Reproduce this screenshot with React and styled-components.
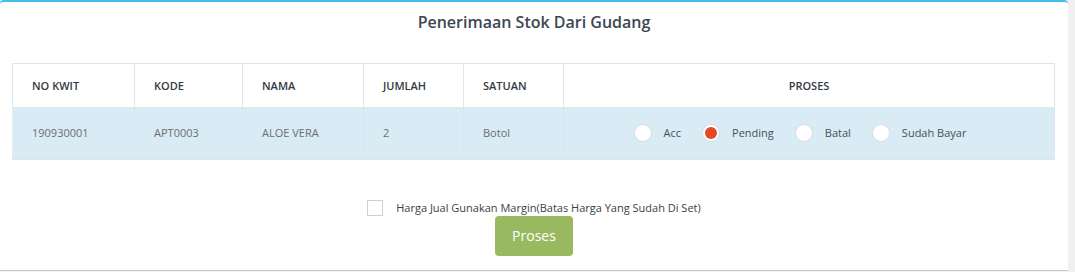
import React, { useState } from "react";
import styled, { createGlobalStyle } from "styled-components";

const Global = createGlobalStyle`
  html, body { margin: 0; padding: 0; background: #f0f0f0; }
  body { font-family: "Open Sans", "Noto Sans", sans-serif; }
  * { box-sizing: border-box; }
`;

const Page = styled.div`
  width: 1075px;
  height: 272px;
  background: #f0f0f0;
  overflow: hidden;
`;

const Panel = styled.section`
  width: 1068px;
  height: 271px;
  background: #fff;
  border-top: 2px solid #3ec0ea;
  border-bottom: 1px solid #c9c9c9;
  border-radius: 4px 4px 0 0;
  display: flex;
  flex-direction: column;
`;

const Title = styled.h3`
  margin: 0;
  height: 42px;
  padding-top: 9px;
  text-align: center;
  font-size: 16px;
  font-weight: 600;
  color: #3b4752;
  line-height: 22px;
`;

const TableWrap = styled.div`
  margin: 19px 13px 0 12px;
`;

const Table = styled.table`
  width: 100%;
  border-collapse: collapse;
  table-layout: fixed;
  font-size: 11px;
`;

const Th = styled.th`
  height: 44px;
  padding: 0 0 0 19px;
  text-align: ${(p) => (p.$center ? "center" : "left")};
  font-weight: 600;
  color: #333a40;
  border: 1px solid #dde6ee;
  background: #fff;
`;

const Row = styled.tr`
  background: #d9ebf5;
`;

const Td = styled.td`
  height: 51px;
  padding: 0 0 0 19px;
  color: #6d6d70;
  border-left: 1px solid #e3edf3;
  border-right: 1px solid #dde6ee;
  border-bottom: 2px solid #dde6ee;
  ${(p) => p.$center && "padding: 0; text-align: center;"}
`;

const RadioGroup = styled.div`
  display: flex;
  justify-content: center;
  align-items: center;
  padding-left: 3px;
`;

const RadioItem = styled.label`
  display: flex;
  align-items: center;
  margin-right: 21px;
  color: #4a4f55;
  font-size: 11px;
  cursor: pointer;
`;

const Circle = styled.span`
  width: 18px;
  height: 18px;
  border-radius: 50%;
  background: #fff;
  border: 1px solid #d6dde2;
  margin-right: 12px;
  display: flex;
  align-items: center;
  justify-content: center;
  &::after {
    content: "";
    width: 12px;
    height: 12px;
    border-radius: 50%;
    background: ${(p) => (p.$on ? "#e44b25" : "transparent")};
  }
`;

const Footer = styled.div`
  display: flex;
  flex-direction: column;
  align-items: center;
  margin-top: 40px;
`;

const CheckLine = styled.label`
  display: flex;
  align-items: center;
  font-size: 11px;
  color: #3b3f44;
  height: 16px;
`;

const Box = styled.span`
  width: 16px;
  height: 16px;
  border: 1px solid #cfcfcf;
  background: #fff;
  margin-right: 13px;
`;

const Button = styled.button`
  width: 78px;
  height: 40px;
  background: #98b960;
  border: none;
  border-radius: 4px;
  color: #fff;
  font-family: "Open Sans", sans-serif;
  font-size: 14px;
  margin-top: 0;
`;

const options = ["Acc", "Pending", "Batal", "Sudah Bayar"];

export default function App() {
  const [val, setVal] = useState("Pending");
  return (
    <Page>
      <Global />
      <Panel>
        <Title>Penerimaan Stok Dari Gudang</Title>
        <TableWrap>
          <Table>
            <colgroup>
              <col style={{ width: 122 }} />
              <col style={{ width: 108 }} />
              <col style={{ width: 121 }} />
              <col style={{ width: 100 }} />
              <col style={{ width: 100 }} />
              <col />
            </colgroup>
            <thead>
              <tr>
                <Th>NO KWIT</Th>
                <Th>KODE</Th>
                <Th>NAMA</Th>
                <Th>JUMLAH</Th>
                <Th>SATUAN</Th>
                <Th $center style={{ paddingLeft: 0 }}>PROSES</Th>
              </tr>
            </thead>
            <tbody>
              <Row>
                <Td>190930001</Td>
                <Td>APT0003</Td>
                <Td>ALOE VERA</Td>
                <Td>2</Td>
                <Td>Botol</Td>
                <Td $center>
                  <RadioGroup>
                    {options.map((o) => (
                      <RadioItem key={o} onClick={() => setVal(o)}>
                        <Circle $on={val === o} />
                        {o}
                      </RadioItem>
                    ))}
                  </RadioGroup>
                </Td>
              </Row>
            </tbody>
          </Table>
        </TableWrap>
        <Footer>
          <CheckLine>
            <Box />
            Harga Jual Gunakan Margin(Batas Harga Yang Sudah Di Set)
          </CheckLine>
          <Button>Proses</Button>
        </Footer>
      </Panel>
    </Page>
  );
}
